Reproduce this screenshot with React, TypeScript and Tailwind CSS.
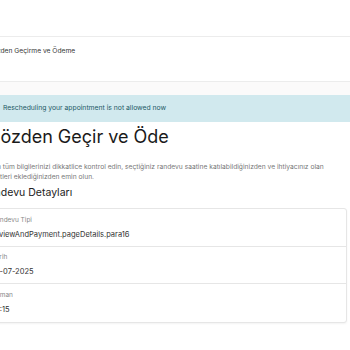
const details = [
  { label: 'Randevu Tipi', value: 'reviewAndPayment.pageDetails.para16' },
  { label: 'Tarih', value: '15-07-2025' },
  { label: 'Zaman', value: '10:15' },
];

export default function App() {
  return (
    <div className="h-[350px] w-[350px] overflow-hidden bg-white font-['Inter',sans-serif]">
      <div className="h-[36px]" />
      <div className="h-[46px] border-y border-[#ececec] bg-white pt-[9px]">
        <div className="-ml-[12px] text-[6.7px] leading-[10px] text-[#333]">Gözden Geçirme ve Ödeme</div>
      </div>
      <div className="h-[13px] bg-[#fbfafa]" />
      <div className="-ml-[10px] flex h-[27px] items-center bg-[#d1e9ee] px-[13px] text-[6.8px] text-[#1f5a66]">
        Rescheduling your appointment is not allowed now
      </div>

      <div className="-ml-[20px] mr-[3px]">
        <h1 className="mt-[3px] pl-[7px] text-[18px] leading-[24px] text-[#1a1a1a]">Gözden Geçir ve Öde</h1>
        <p className="mt-[13px] pr-[12px] pl-[1px] text-[6.7px] leading-[10px] text-[#777]">
          Lütfen tüm bilgilerinizi dikkatlice kontrol edin, seçtiğiniz randevu saatine katılabildiğinizden ve ihtiyacınız olan
          hizmetleri eklediğinizden emin olun.
        </p>
        <h2 className="mt-[3px] pl-[2px] text-[10.5px] leading-[16px] text-[#222]">Randevu Detayları</h2>

        <div className="mt-[7px] rounded-[3px] border border-[#e6e6e6] bg-white shadow-[0_1px_2px_rgba(0,0,0,0.05)]">
          {details.map((d, i) => (
            <div
              key={d.label}
              className={`flex h-[37.5px] flex-col justify-center px-[11px] ${i < details.length - 1 ? 'border-b border-[#e6e6e6]' : ''}`}
            >
              <div className="text-[6.5px] leading-[10px] text-[#888]">{d.label}</div>
              <div className="mt-[4px] text-[7.5px] leading-[11px] text-[#333]">{d.value}</div>
            </div>
          ))}
        </div>
      </div>
    </div>
  );
}
